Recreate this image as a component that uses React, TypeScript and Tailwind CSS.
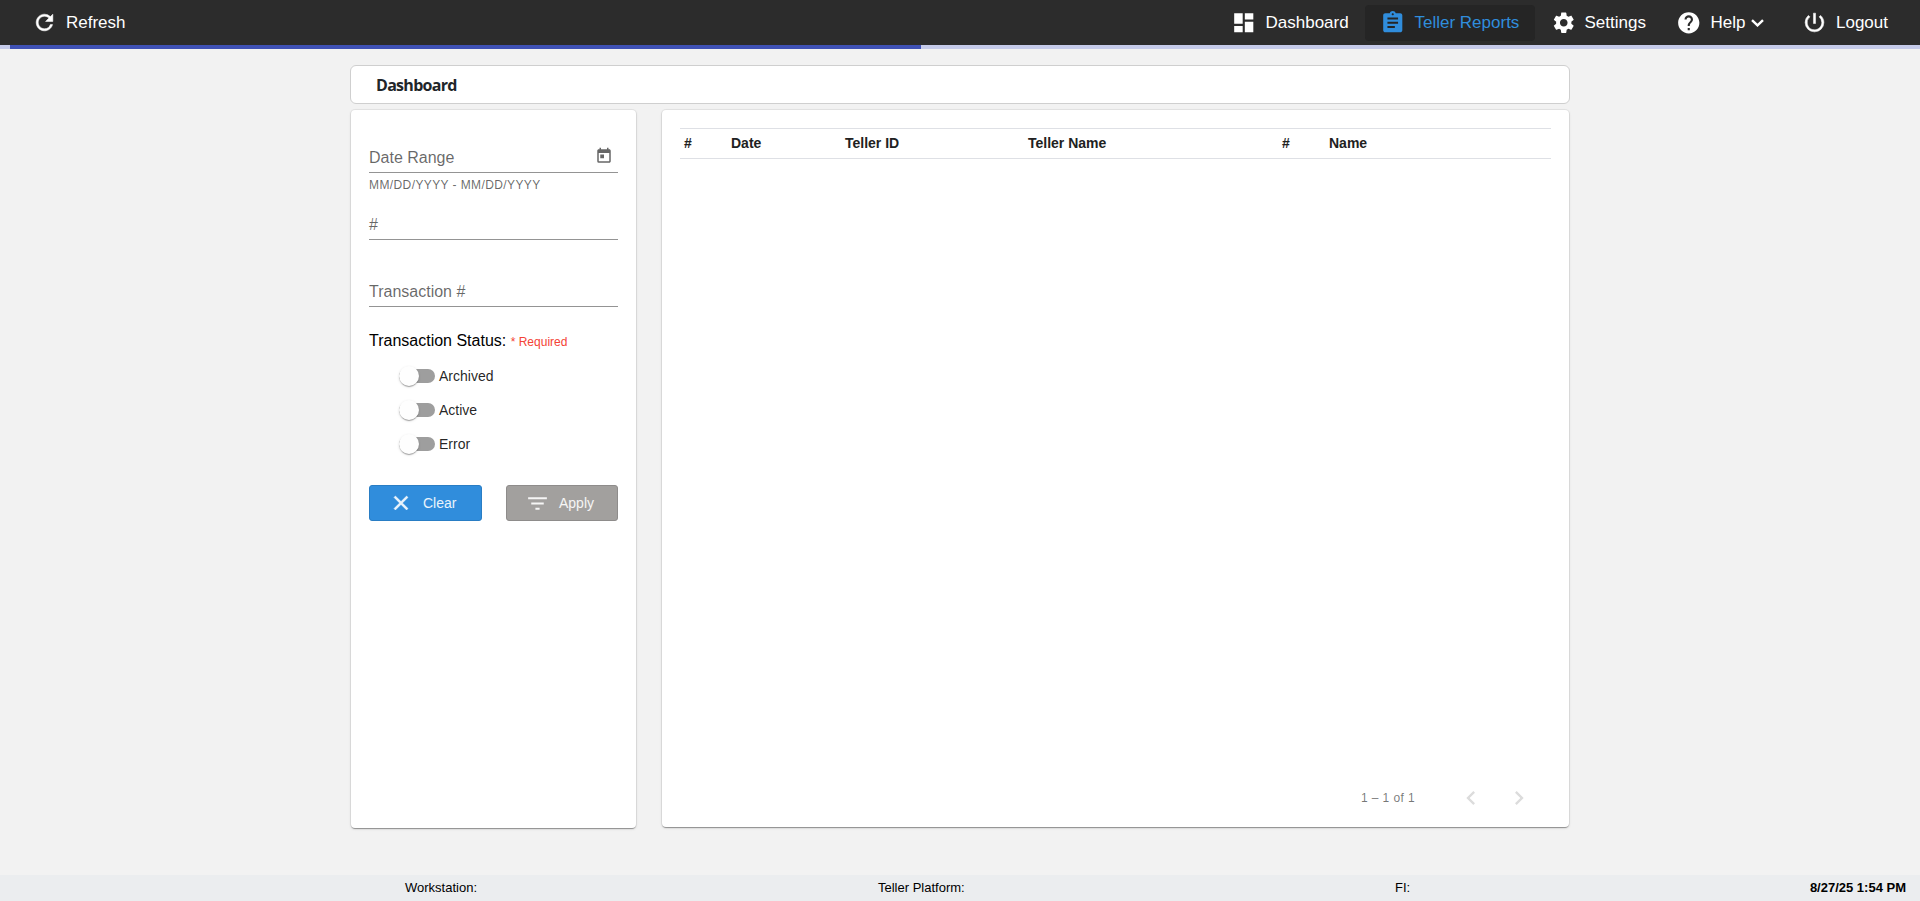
import type { ReactNode } from "react";
import {
  MdAssignment,
  MdChevronLeft,
  MdChevronRight,
  MdDashboard,
  MdFilterList,
  MdHelp,
  MdSettings,
  MdToday,
} from "react-icons/md";

const card =
  "rounded bg-white shadow-[0_2px_1px_-1px_rgba(0,0,0,0.2),0_1px_1px_0_rgba(0,0,0,0.14),0_1px_3px_0_rgba(0,0,0,0.12),0_0_0_1px_rgba(0,0,0,0.05)]";

function BoldIcon({ d, className }: { d: string; className: string }) {
  return (
    <svg viewBox="0 0 24 24" className={`shrink-0 fill-current stroke-current ${className}`} strokeWidth={0.5}>
      <path d={d} />
    </svg>
  );
}

const refreshPath =
  "M17.65 6.35A7.958 7.958 0 0012 4c-4.42 0-7.99 3.58-7.99 8s3.57 8 7.99 8c3.73 0 6.84-2.55 7.73-6h-2.08A5.99 5.99 0 0112 18c-3.31 0-6-2.69-6-6s2.69-6 6-6c1.66 0 3.14.69 4.22 1.78L13 11h7V4l-2.35 2.35z";
const powerPath =
  "M13 3h-2v10h2V3zm4.83 2.17l-1.42 1.42A6.92 6.92 0 0119 12c0 3.87-3.13 7-7 7A6.995 6.995 0 017.58 6.58L6.17 5.17A8.932 8.932 0 003 12a9 9 0 0018 0c0-2.74-1.23-5.18-3.17-6.83z";
const closePath =
  "M19 6.41L17.59 5 12 10.59 6.41 5 5 6.41 10.59 12 5 17.59 6.41 19 12 13.41 17.59 19 19 17.59 13.41 12z";

function NavItem({ icon, label, className, trailing }: { icon: ReactNode; label: string; className: string; trailing?: ReactNode }) {
  return (
    <button className={`flex h-9 shrink-0 items-center gap-[9px] rounded pl-[15px] text-[17px] ${className}`}>
      {icon}
      <span className="whitespace-nowrap">{label}</span>
      {trailing}
    </button>
  );
}

function Field({ label, hint, icon }: { label: string; hint?: string; icon?: ReactNode }) {
  return (
    <div className="h-[67px]">
      <div className="flex h-[30px] items-start justify-between border-b border-[#949494] text-base leading-[30px] text-black/60">
        <span>{label}</span>
        {icon}
      </div>
      {hint && <div className="pt-[5px] text-xs leading-[15px] tracking-[0.4px] text-black/60">{hint}</div>}
    </div>
  );
}

function Toggle({ label }: { label: string }) {
  return (
    <label className="flex h-[34px] items-center gap-1 text-sm text-black/87">
      <span className="flex h-[14px] w-9 items-center rounded-full bg-[#9e9e9e]">
        <span className="size-5 shrink-0 rounded-full bg-[#fefefe] shadow-[0_2px_1px_-1px_rgba(0,0,0,0.2),0_1px_1px_0_rgba(0,0,0,0.14),0_1px_3px_0_rgba(0,0,0,0.12)]" />
      </span>
      {label}
    </label>
  );
}

export default function App() {
  return (
    <div className="flex h-[901px] w-full flex-col overflow-hidden bg-[#f2f2f2] font-['Liberation_Sans',Arial,sans-serif]">
      <header className="flex h-[45px] shrink-0 items-center justify-between bg-[#2c2c2c] text-white">
        <NavItem className="ml-[17px]" icon={<BoldIcon d={refreshPath} className="size-[25px]" />} label="Refresh" />
        <nav className="flex items-center">
          <NavItem className="w-[149px]" icon={<MdDashboard className="size-[25.5px]" />} label="Dashboard" />
          <NavItem className="w-[170px] bg-[#252525] text-[#308ddc]" icon={<MdAssignment className="size-[25.5px]" />} label="Teller Reports" />
          <NavItem className="w-[126px] gap-[8px]! pl-4!" icon={<MdSettings className="size-[25.5px]" />} label="Settings" />
          <NavItem
            className="w-[126px]"
            icon={<MdHelp className="size-[25.5px]" />}
            label="Help"
            trailing={
              <svg viewBox="0 0 13 8" className="-ml-[3px] h-2 w-[13px] fill-none stroke-current" strokeWidth={2.4}>
                <path d="M1 1.2L6.5 6.4L12 1.2" />
              </svg>
            }
          />
          <NavItem className="w-[133px]" icon={<BoldIcon d={powerPath} className="size-[25px]" />} label="Logout" />
        </nav>
      </header>
      <div className="h-1 shrink-0 bg-[#c5cae9] pl-[10px]">
        <div className="h-full w-[911px] bg-[#3f51b5]" />
      </div>

      <main className="mx-auto w-[1220px] grow pt-4">
        <div className="flex h-[39px] items-center rounded-md border border-[#cfcfcf] bg-white pt-px pl-[25px] font-['Open_Sans','Noto_Sans',sans-serif] text-base font-bold tracking-[-0.7px] text-[#212529]">
          Dashboard
        </div>
        <div className="mx-px mt-1.5 flex items-start justify-between">
          <section className={`h-[718px] w-[285px] px-[18px] pt-[33px] ${card}`}>
            <Field label="Date Range" hint="MM/DD/YYYY - MM/DD/YYYY" icon={<MdToday className="mt-1 mr-[5px] size-[18px]" />} />
            <Field label="#" />
            <Field label="Transaction #" />
            <div className="mt-[-15px] text-base leading-6 text-black">
              Transaction Status: <span className="text-xs text-[#f44336]">* Required</span>
            </div>
            <div className="mt-[6px] pl-[30px]">
              <Toggle label="Archived" />
              <Toggle label="Active" />
              <Toggle label="Error" />
            </div>
            <div className="mt-6 flex justify-between text-sm text-white/90">
              <button className="flex h-9 w-[113px] items-center gap-[10px] rounded-[3px] border border-[#297dc4] bg-[#308ddc] pl-[19px]">
                <BoldIcon d={closePath} className="size-6" />
                Clear
              </button>
              <button className="flex h-9 w-[112px] items-center gap-[9px] rounded-[3px] border border-[#8e8c8b] bg-[#a2a09e] pl-[18px]">
                <MdFilterList className="size-[25px]" />
                Apply
              </button>
            </div>
          </section>

          <section className={`flex h-[717px] w-[907px] flex-col justify-between px-[18px] pt-[18px] ${card}`}>
            <div className="grid h-[31px] grid-cols-[47px_114px_183px_254px_47px_1fr] items-center border-y border-[#dee0e5] pb-0.5 pl-1 text-sm font-bold text-[#212121]">
              <span>#</span>
              <span>Date</span>
              <span>Teller ID</span>
              <span>Teller Name</span>
              <span>#</span>
              <span>Name</span>
            </div>
            <div className="mb-[9px] flex h-10 items-center justify-end pr-[18px] text-xs tracking-[0.4px] text-black/54">
              <span className="mr-[42px]">1 – 1 of 1</span>
              <MdChevronLeft className="mr-5 size-7 text-[#dcdcdc]" />
              <MdChevronRight className="size-7 text-[#dcdcdc]" />
            </div>
          </section>
        </div>
      </main>

      <footer className="flex h-[26px] shrink-0 items-center bg-[#ebedef] pl-[405px] text-[13px] text-black">
        <span className="w-[473px] whitespace-nowrap">Workstation:</span>
        <span className="w-[517px] whitespace-nowrap">Teller Platform:</span>
        <span className="grow">FI:</span>
        <span className="pr-[14px] font-bold">8/27/25 1:54 PM</span>
      </footer>
    </div>
  );
}
